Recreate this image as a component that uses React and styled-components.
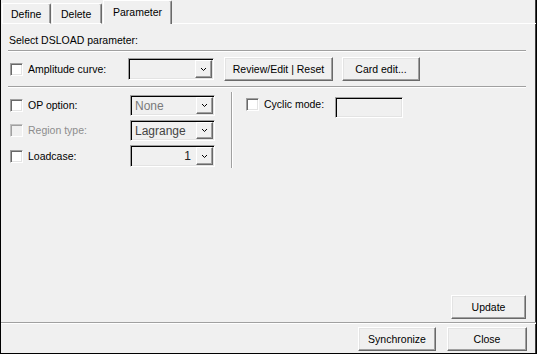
import React from "react";
import styled, { createGlobalStyle } from "styled-components";

const GlobalStyle = createGlobalStyle`
  html, body {
    margin: 0;
    padding: 0;
    background: #f0f0f0;
  }
  * {
    box-sizing: border-box;
  }
`;

const Chevron = () => (
  <svg width="5" height="3" viewBox="0 0 5 3">
    <polyline points="0,0 2.5,2.5 5,0" fill="none" stroke="#000" strokeWidth="1" />
  </svg>
);

const Combo = ({ value, align = "left", color = "#000", width = 85, height = 21 }) => (
  <ComboBox $width={width} $height={height}>
    <ComboValue $align={align} style={{ color }}>{value}</ComboValue>
    <DropButton>
      <Chevron />
    </DropButton>
  </ComboBox>
);

const App = () => {
  return (
    <Window>
      <GlobalStyle />
      <TabStrip>
        <Tab $width={49}>Define</Tab>
        <Tab $width={50}>Delete</Tab>
        <Tab $width={69} $active>Parameter</Tab>
        <TabFill />
      </TabStrip>

      <Body>
        <Heading>Select DSLOAD parameter:</Heading>
        <Separator />

        <AmpRow>
          <Check />
          <Label $width={100}>Amplitude curve:</Label>
          <Combo value="" width={86} height={22} />
          <Button $width={109} $ml={10}>Review/Edit | Reset</Button>
          <Button $width={78} $ml={9}>Card edit...</Button>
        </AmpRow>
        <Separator />

        <Section>
          <OptionGrid>
            <Check />
            <Label>OP option:</Label>
            <Combo value="None" color="#7a7a7a" />

            <Check $disabled />
            <Label $disabled>Region type:</Label>
            <Combo value="Lagrange" color="#444" />

            <Check />
            <Label>Loadcase:</Label>
            <Combo value="1" align="right" color="#222" height={22} />
          </OptionGrid>
          <VSeparator />
          <CyclicRow>
            <CheckLine>
              <Check />
              <Label>Cyclic mode:</Label>
            </CheckLine>
            <TextField />
          </CyclicRow>
        </Section>

        <Spacer />
        <UpdateRow>
          <Button $width={75}>Update</Button>
        </UpdateRow>
      </Body>

      <Separator />
      <Footer>
        <Button $width={78}>Synchronize</Button>
        <Button $width={80} $ml={11}>Close</Button>
      </Footer>
    </Window>
  );
};

export default App;

const Window = styled.div`
  width: 537px;
  height: 354px;
  display: flex;
  flex-direction: column;
  background: #f0f0f0;
  border-left: 1px solid #000;
  border-right: 1px solid #000;
  border-bottom: 1px solid #000;
  box-shadow: inset -1px 0 0 #404040;
  font-family: "Liberation Sans", Arial, sans-serif;
  font-size: 10.5px;
  color: #000;
  overflow: hidden;
`;

const TabStrip = styled.div`
  display: flex;
  align-items: flex-end;
  height: 24px;
  flex-shrink: 0;
`;

const Tab = styled.div`
  width: ${(p) => p.$width}px;
  height: ${(p) => (p.$active ? 24 : 21)}px;
  margin-left: 1px;
  padding: ${(p) => (p.$active ? "5px 0 0 9px" : "4px 0 0 8px")};
  background: #f0f0f0;
  border-top: 1px solid #fff;
  border-left: 1px solid #fff;
  border-right: 1px solid #696969;
  border-top-right-radius: 2px;
  box-shadow: inset -1px 0 0 #a0a0a0;
  border-bottom: ${(p) => (p.$active ? "none" : "1px solid #fff")};
  z-index: ${(p) => (p.$active ? 1 : 0)};
  line-height: 13px;
  white-space: nowrap;
`;

const TabFill = styled.div`
  flex: 1;
  height: 1px;
  background: #fff;
`;

const Body = styled.div`
  flex: 1;
  display: flex;
  flex-direction: column;
  padding: 10px 10px 0 7px;
`;

const Heading = styled.div`
  height: 13px;
  line-height: 13px;
  padding-left: 1px;
  margin-bottom: 3px;
`;

const Separator = styled.div`
  height: 2px;
  flex-shrink: 0;
  border-top: 1px solid #a0a0a0;
  border-bottom: 1px solid #fff;
`;

const AmpRow = styled.div`
  display: flex;
  align-items: center;
  height: 24px;
  margin: 5px 0 5px;
`;

const Check = styled.div`
  width: 13px;
  height: 13px;
  margin-left: 2px;
  flex-shrink: 0;
  border: 1px solid;
  border-color: ${(p) => (p.$disabled ? "#c0c0c0 #fff #fff #c0c0c0" : "#a0a0a0 #fff #fff #a0a0a0")};
  box-shadow: ${(p) =>
    p.$disabled ? "inset 1px 1px 0 #a0a0a0" : "inset 1px 1px 0 #696969, inset -1px -1px 0 #e3e3e3"};
  background: ${(p) => (p.$disabled ? "#f0f0f0" : "#fff")};
`;

const Label = styled.div`
  width: ${(p) => (p.$width ? `${p.$width}px` : "auto")};
  margin-left: 5px;
  line-height: 13px;
  white-space: nowrap;
  color: ${(p) => (p.$disabled ? "#8d8d8d" : "#000")};
`;

const ComboBox = styled.div`
  display: flex;
  align-items: stretch;
  width: ${(p) => p.$width}px;
  height: ${(p) => p.$height}px;
  border: 1px solid;
  border-color: #a0a0a0 #fff #fff #a0a0a0;
  box-shadow: inset 1px 1px 0 #000, inset -1px -1px 0 #e3e3e3;
  background: #f0f0f0;
  padding: 1px;
`;

const ComboValue = styled.div`
  flex: 1;
  display: flex;
  align-items: center;
  justify-content: ${(p) => (p.$align === "right" ? "flex-end" : "flex-start")};
  padding: 0 5px 0 3px;
  font-size: 12px;
`;

const DropButton = styled.div`
  width: 17px;
  display: flex;
  align-items: center;
  justify-content: center;
  border: 1px solid;
  border-color: #fff #696969 #696969 #fff;
  box-shadow: inset -1px -1px 0 #a0a0a0;
  background: #f0f0f0;
`;

const Button = styled.div`
  width: ${(p) => p.$width}px;
  height: 24px;
  margin-left: ${(p) => p.$ml || 0}px;
  display: flex;
  align-items: center;
  justify-content: center;
  flex-shrink: 0;
  border: 1px solid;
  border-color: #fff #696969 #696969 #fff;
  box-shadow: inset -1px -1px 0 #a0a0a0, inset 1px 1px 0 #e3e3e3;
  background: #f0f0f0;
  white-space: nowrap;
`;

const Section = styled.div`
  display: flex;
  align-items: flex-start;
`;

const OptionGrid = styled.div`
  display: grid;
  grid-template-columns: 15px 107px 85px;
  grid-template-rows: 21px 21px 22px;
  row-gap: 4px;
  align-items: center;
  padding-top: 7px;
`;

const VSeparator = styled.div`
  width: 2px;
  height: 76px;
  margin: 4px 0 0 16px;
  border-left: 1px solid #a0a0a0;
  border-right: 1px solid #fff;
`;

const CyclicRow = styled.div`
  display: flex;
  align-items: flex-start;
  margin: 9px 0 0 11px;
`;

const CheckLine = styled.div`
  display: flex;
  align-items: center;
  margin-top: 1px;
`;

const TextField = styled.div`
  width: 68px;
  height: 21px;
  margin-left: 11px;
  border: 1px solid;
  border-color: #a0a0a0 #fff #fff #a0a0a0;
  box-shadow: inset 1px 1px 0 #000, inset -1px -1px 0 #e3e3e3;
  background: #f0f0f0;
`;

const Spacer = styled.div`
  flex: 1;
`;

const UpdateRow = styled.div`
  display: flex;
  justify-content: flex-end;
  margin-bottom: 3px;
`;

const Footer = styled.div`
  display: flex;
  justify-content: flex-end;
  padding: 3px 9px 0 0;
  height: 29px;
`;
